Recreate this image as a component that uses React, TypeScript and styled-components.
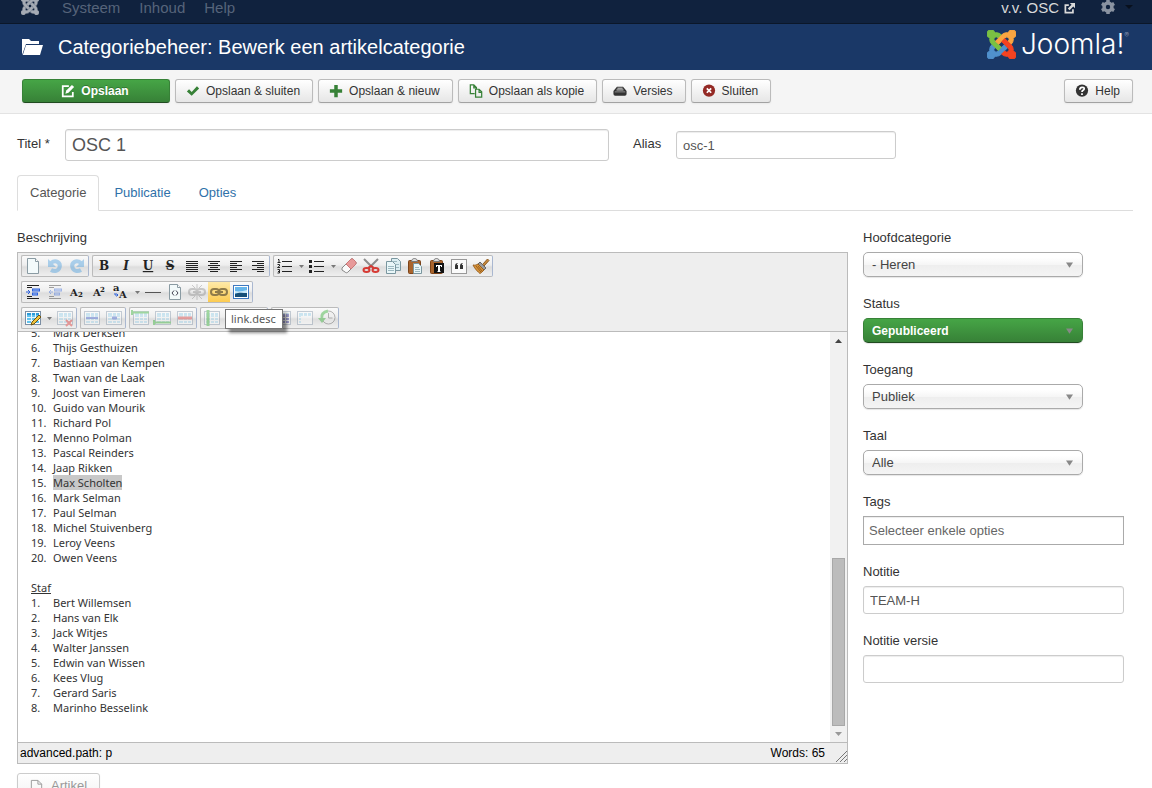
import React, { ReactNode } from "react";
import styled, { createGlobalStyle, css } from "styled-components";

const GlobalStyle = createGlobalStyle`
  *, *::before, *::after { box-sizing: border-box; }
  body {
    margin: 0;
    background: #fff;
    color: #333;
    font: 13px/18px "Liberation Sans", Arial, sans-serif;
  }
  button, input, select { font: inherit; color: inherit; margin: 0; }
  a { color: #3071a9; text-decoration: none; }
`;

const Page = styled.div`
  height: 100vh;
  overflow: hidden;
`;

/* ---------- top navigation ---------- */

const NavBar = styled.nav`
  display: flex;
  align-items: flex-start;
  padding: 0 19px 7px 21px;
  background: #10223e;
  border-bottom: 1px solid #0b1729;
  font-size: 15px;
  line-height: 16px;
`;

const NavMark = styled.a`
  display: flex;
  width: 41px;
  height: 15px;
  align-items: flex-end;
  overflow: hidden;
`;

const NavMenu = styled.div`
  display: flex;
  flex: 1;
  gap: 19px;
`;

const NavLink = styled.a`
  color: #56647a;
`;

const SiteLink = styled.a`
  display: flex;
  align-items: center;
  gap: 5px;
  margin-right: 26px;
  color: #d9d9d9;
`;

const GearButton = styled.button`
  display: flex;
  align-items: center;
  gap: 10px;
  height: 14px;
  padding: 0;
  border: 0;
  background: none;
  color: #8a93a1;
`;

/* ---------- title bar ---------- */

const Header = styled.header`
  display: flex;
  align-items: center;
  height: 46px;
  padding: 0 23px 0 22px;
  background: #1a3867;
  color: #fff;
`;

const PageTitle = styled.h1`
  flex: 1;
  margin: 0 0 0 15px;
  font-size: 20px;
  line-height: 24px;
  font-weight: 400;
`;

const Logo = styled.div`
  display: flex;
  align-items: center;
  gap: 5px;
  padding-bottom: 6px;
`;

const LogoWord = styled.span`
  display: flex;
  font: 300 28px/30px Inter, sans-serif;
`;

const Registered = styled.sup`
  color: #8c9bb3;
  font-size: 7px;
  line-height: 14px;
`;

/* ---------- action bar ---------- */

const ActionBar = styled.div`
  display: flex;
  gap: 5px;
  padding: 9px 19px 10px 22px;
  background: #f5f5f5;
  border-bottom: 1px solid #e3e3e3;
`;

const ActionButton = styled.button<{ $primary?: boolean; $end?: boolean }>`
  display: flex;
  align-items: center;
  justify-content: center;
  gap: 6px;
  height: 24px;
  padding: 0 12px 0 10px;
  border: 1px solid #b3b3b3;
  border-color: #bbb #bbb #a2a2a2;
  border-radius: 3px;
  background: linear-gradient(#fff, #e6e6e6);
  box-shadow: 0 1px 2px rgba(0, 0, 0, 0.05);
  font-size: 12px;
  white-space: nowrap;
  ${(p) => p.$end && css`margin-left: auto;`}
  ${(p) =>
    p.$primary &&
    css`
      width: 148px;
      border-color: #378137 #378137 #204b20;
      background: linear-gradient(#46a546, #378137);
      color: #fff;
      font-weight: 700;
      text-shadow: 0 -1px 0 rgba(0, 0, 0, 0.25);
    `}
`;

/* ---------- form ---------- */

const Main = styled.main`
  padding: 15px 19px 0 17px;
`;

const TitleRow = styled.div`
  display: flex;
  align-items: center;
  height: 32px;
`;

const RowLabel = styled.label<{ $width: number }>`
  width: ${(p) => p.$width}px;
  padding-bottom: 3px;
`;

const TextInput = styled.input<{ $large?: boolean; $square?: boolean }>`
  height: ${(p) => (p.$large ? 32 : 28)}px;
  padding: 0 6px;
  border: 1px solid #ccc;
  border-radius: 3px;
  background: #fff;
  box-shadow: inset 0 1px 1px rgba(0, 0, 0, 0.075);
  color: #555;
  ${(p) =>
    p.$large &&
    css`
      flex: 0 1 544px;
      font-size: 18px;
    `}
  ${(p) =>
    p.$square &&
    css`
      height: 29px;
      padding: 0 5px;
      border-color: #aaa;
      border-radius: 0;
    `}
  &::placeholder { color: #666; opacity: 1; }
`;

const AliasField = styled.div`
  display: flex;
  align-items: center;
  margin-left: 24px;
  ${TextInput} { width: 220px; }
`;

const Tabs = styled.div`
  display: flex;
  gap: 2px;
  margin-top: 14px;
  border-bottom: 1px solid #ddd;
`;

const Tab = styled.a<{ $active?: boolean }>`
  padding: 8px 12px;
  margin-bottom: -1px;
  border: 1px solid transparent;
  border-radius: 4px 4px 0 0;
  ${(p) =>
    p.$active &&
    css`
      border-color: #ddd #ddd #fff;
      background: #fff;
      color: #555;
    `}
`;

const Columns = styled.div`
  display: grid;
  grid-template-columns: minmax(0, 1fr) 261px;
  gap: 15px;
  padding: 18px 9px 0 0;
`;

const FieldLabel = styled.label`
  display: block;
  margin-bottom: 5px;
`;

const Side = styled.div`
  display: flex;
  flex-direction: column;
  gap: 18px;
  ${TextInput} { display: block; width: 100%; }
`;

const SelectBox = styled.div`
  display: grid;
  width: 220px;
  align-items: center;
`;

const SelectControl = styled.select<{ $green?: boolean }>`
  grid-area: 1 / 1;
  appearance: none;
  height: 25px;
  padding: 0 24px 0 8px;
  border: 1px solid #aaa;
  border-radius: 5px;
  background: linear-gradient(#fff 20%, #f6f6f6 50%, #eee 52%, #f4f4f4 100%);
  box-shadow: 0 1px 1px rgba(0, 0, 0, 0.1);
  color: #444;
  ${(p) =>
    p.$green &&
    css`
      border-color: #378137 #378137 #204b20;
      background: linear-gradient(#46a546, #378137);
      color: #fff;
      font-size: 12px;
      font-weight: 700;
    `}
`;

const SelectArrow = styled.svg`
  grid-area: 1 / 1;
  justify-self: end;
  margin-right: 10px;
  pointer-events: none;
`;

/* ---------- editor ---------- */

const Editor = styled.div`
  border: 1px solid #bbb;
  background: #eee;
`;

const Toolbars = styled.div`
  display: flex;
  flex-direction: column;
  gap: 4px;
  padding: 2px 3px;
  border-bottom: 1px solid #bbb;
`;

const ToolRow = styled.div`
  display: flex;
  gap: 3px;
`;

const ToolGroup = styled.div`
  display: flex;
  height: 22px;
  border: 1px solid #bbb;
  border-right-color: #a9b7d0;
  border-radius: 2px;
  background: linear-gradient(#fafafa, #eee 45%, #ddd 55%, #efefef);
`;

const ToolButton = styled.button<{ $faded?: boolean; $hot?: boolean }>`
  display: flex;
  align-items: center;
  justify-content: center;
  width: 22px;
  height: 20px;
  padding: 0;
  border: 0;
  background: ${(p) => (p.$hot ? "linear-gradient(#fee9a8, #fccb51)" : "none")};
  svg { opacity: ${(p) => (p.$faded ? 0.4 : 1)}; }
`;

const ToolArrow = styled(ToolButton)`
  width: 10px;
`;

const TooltipAnchor = styled.div`
  position: relative;
`;

const Tooltip = styled.div`
  position: absolute;
  top: 27px;
  left: 17px;
  z-index: 2;
  padding: 0 6px 0 5px;
  border: 1px solid #767676;
  background: #fff;
  box-shadow: 4px 4px 3px rgba(0, 0, 0, 0.45);
  color: #575757;
  font: 11px/18px "Noto Sans", sans-serif;
  white-space: nowrap;
`;

const EditArea = styled.div`
  display: flex;
  height: 410px;
  background: #fff;
`;

const Document = styled.div`
  display: flex;
  flex: 1;
  flex-direction: column;
  justify-content: flex-end;
  padding: 0 13px 27px;
  overflow: hidden;
  font: 11px/15px "Noto Sans", Tahoma, sans-serif;
`;

const Names = styled.ol`
  flex: none;
  margin: 0;
  padding: 0;
  list-style: none;
`;

const NameRow = styled.li`
  display: flex;
`;

const Num = styled.span`
  width: 22px;
`;

const Selected = styled.mark`
  background: #c8c8c8;
  color: inherit;
`;

const StafHeading = styled.p`
  margin: 15px 0 0;
  text-decoration: underline;
`;

const Scrollbar = styled.div`
  display: flex;
  flex-direction: column;
  align-items: center;
  width: 17px;
  padding: 7px 1px 6px;
  background: #f1f1f1;
`;

const Thumb = styled.div`
  width: 13px;
  height: 168px;
  margin: auto 0 6px;
  border: 1px solid #a8a8a8;
  background: #bcbcbc;
`;

const StatusBar = styled.div`
  display: flex;
  align-items: center;
  justify-content: space-between;
  height: 21px;
  padding-left: 2px;
  border-top: 1px solid #bbb;
  color: #000;
  font-size: 12px;
`;

const WordCount = styled.span`
  display: flex;
  align-items: flex-end;
  gap: 10px;
`;

const InsertButton = styled(ActionButton)`
  height: 26px;
  gap: 7px;
  margin-top: 9px;
  padding: 0 12px 0 11px;
  color: #999;
  font-size: 13px;
  background: linear-gradient(#fff, #f2f2f2);
  border-color: #ccc;
`;

/* ---------- icons ---------- */

const ARM =
  "M16.719 14.759L14.22 17.26l-2.37 2.37-.462.466c-1.368 1.365-3.297 1.83-5.047 1.397-.327 1.424-1.604 2.49-3.13 2.49C1.438 23.983 0 22.547 0 20.772c0-1.518 1.055-2.789 2.469-3.123-.446-1.76.016-3.705 1.396-5.08l.179-.18 2.37 2.37-.184.181c-.769.779-.769 2.024 0 2.789.771.78 2.022.78 2.787 0l.465-.465 2.367-2.371 2.502-2.506z";

const JoomlaMark = ({ size, colors }: { size: number; colors: string[] }) => (
  <svg width={size} height={size} viewBox="0 0 24 24" style={{ flex: "none" }} aria-hidden>
    {colors.map((c, i) => (
      <path key={i} d={ARM} fill={c} stroke={c} strokeWidth="0.9" transform={`rotate(${i * 90} 12 12)`} />
    ))}
  </svg>
);

const Triangle = ({ w = 5, h = 3, color = "#777", up = false }) => (
  <svg width={w} height={h} viewBox="0 0 10 10" preserveAspectRatio="none" aria-hidden>
    <path d={up ? "M0 10L5 0L10 10z" : "M0 0H10L5 10z"} fill={color} />
  </svg>
);

const Glyph = ({ children, w = 14 }: { children: ReactNode; w?: number }) => (
  <svg width={w} height={w} viewBox="0 0 16 16" fill="none" aria-hidden>
    {children}
  </svg>
);

const EditIcon = () => (
  <Glyph>
    <path d="M9 2.500H2v11.500h11.500V9" stroke="#fff" strokeWidth="2" />
    <path d="M5 11l1-3.500L12.500 1 15 3.500 8.500 10z" fill="#fff" />
  </Glyph>
);
const CheckIcon = () => (
  <Glyph>
    <path d="M1 8.500L3.500 6l3 3L12.500 2.500 15 5l-8.500 8.500z" fill="#378137" />
  </Glyph>
);
const PlusIcon = () => (
  <Glyph>
    <path d="M6 1h4v5h5v4h-5v5H6v-5H1V6h5z" fill="#378137" />
  </Glyph>
);
const CopyIcon = () => (
  <Glyph>
    <path d="M6.500 11H1.500V1h4L8.500 4v2M5.500 1v3.500h3" stroke="#378137" strokeWidth="1.400" />
    <path d="M7.500 6h4l3 3v6h-7zM11.500 6v3.500h3" stroke="#378137" strokeWidth="1.400" />
  </Glyph>
);
const DriveIcon = () => (
  <Glyph>
    <path d="M4.500 3h7l4 5v3.500a2 2 0 0 1-2 2h-11a2 2 0 0 1-2-2V8z" fill="#333" />
    <path d="M5 4.800h6M4 6.800h8" stroke="#eee" />
    <path d="M2 9h12" stroke="#999" />
  </Glyph>
);
const CancelIcon = () => (
  <Glyph>
    <circle cx="8" cy="7.500" r="7" fill="#942a25" />
    <path d="M5.500 5l5 5M10.500 5l-5 5" stroke="#fff" strokeWidth="2" />
  </Glyph>
);
const HelpIcon = () => (
  <Glyph>
    <circle cx="8" cy="7.500" r="7" fill="#333" />
    <path d="M5.500 6.500C5.500 3 10.500 3 10.500 5.500 10.500 7.500 8 7 8 9" stroke="#fff" strokeWidth="2" />
    <path d="M7 10.500h2v2H7z" fill="#fff" />
  </Glyph>
);
const FileIcon = () => (
  <Glyph w={15}>
    <path d="M2.500 1.500h7l4 4v9h-11zM9.500 1.500v4h4" stroke="#999" />
  </Glyph>
);
const ExternalIcon = () => (
  <Glyph w={11}>
    <path d="M7 3H2v11h11V9" stroke="currentColor" strokeWidth="2.500" />
    <path d="M8.500 0H16v7.500L13.500 5l-5.500 5.500L5.500 8l5.500-5.500z" fill="currentColor" />
  </Glyph>
);
const GearIcon = () => (
  <Glyph w={14}>
    <circle cx="8" cy="8" r="4.500" stroke="currentColor" strokeWidth="4" />
    <path d="M8 0v3M8 13v3M1 4l2.600 1.500M12.400 10.500L15 12M1 12l2.600-1.500M12.400 5.500L15 4" stroke="currentColor" strokeWidth="4" />
  </Glyph>
);
const FolderIcon = () => (
  <svg width="21" height="17" viewBox="0 0 21 17" aria-hidden>
    <path d="M0 16V0h7l2 2h8v3H4z" fill="#fff" />
    <path d="M4 6h17l-3 10H.8z" fill="#fff" />
  </svg>
);

const Svg = ({ children }: { children: ReactNode }) => (
  <svg width="20" height="20" viewBox="0 0 20 20" fill="none" aria-hidden>
    {children}
  </svg>
);

const serif = "'DejaVu Serif', serif";
const Letter = ({ t, italic, line }: { t: string; italic?: boolean; line?: string }) => (
  <Svg>
    <text x="10" y="14" textAnchor="middle" fill="#222" fontFamily={serif} fontSize="12" fontWeight="700" fontStyle={italic ? "italic" : "normal"} textDecoration={line}>
      {t}
    </text>
  </Svg>
);
const Bars = ({ rows }: { rows: number[][] }) => (
  <Svg>
    {rows.map(([x, w], i) => (
      <rect key={i} x={x} y={5 + i * 2} width={w} height="1" fill="#222" />
    ))}
  </Svg>
);
const paper = <path d="M4.500 2.500h8l3 3v12h-11z" fill="#f3fafb" stroke="#8a9ba3" />;
const paperFold = <path d="M12.500 2.500v3h3" stroke="#8a9ba3" fill="#fff" />;

const Sheet = ({ children, head = "#8fd0ee" }: { children?: ReactNode; head?: string }) => (
  <Svg>
    <rect x="2.500" y="3.500" width="15" height="13" fill="#fff" stroke="#7b8ea3" />
    <path d="M4 5h12v10H4z" fill="#9fd8f2" />
    <path d="M4 5h12v2H4z" fill={head} />
    <path d="M4 9.500h12M4 12.500h12M8.500 5v10M12.500 5v10" stroke="#fff" />
    {children}
  </Svg>
);

const dent = (flip: boolean) => (
  <Svg>
    <path d="M4 3.500h12M4 16.500h12M4 5.500h5M4 14.500h5" stroke="#222" />
    <path d="M9 8h8M9 12h6" stroke="#2b5fd9" strokeWidth="3" />
    <path d="M10 8h6M10 12h4" stroke="#9dbcf5" />
    <path d={flip ? "M8 10H4M6 8l-2 2 2 2" : "M3 10h4M5 8l2 2-2 2"} stroke="#2b5fd9" />
  </Svg>
);

const clipboard = (
  <>
    <rect x="3.500" y="4.500" width="12" height="13" rx="1" fill="#a9642c" stroke="#7c4319" />
    <path d="M6.500 5.500c0-4 6-4 6 0z" fill="#ddd" stroke="#777" />
  </>
);

const undoArrow = (
  <>
    <path d="M6 7c5-4 10 0 8.500 4.500C13.500 15 9.500 16 6 14" stroke="#3f9ae0" strokeWidth="4" />
    <path d="M3 3v8h8z" fill="#3f9ae0" />
  </>
);

const chain = (c: string) => (
  <g stroke={c} strokeWidth="2">
    <rect x="2" y="7" width="8" height="6" rx="3" />
    <rect x="10" y="7" width="8" height="6" rx="3" />
    <path d="M6 10h8" />
  </g>
);

const icons: Record<string, ReactNode> = {
  new: <Svg>{paper}{paperFold}</Svg>,
  undo: <Svg>{undoArrow}</Svg>,
  redo: <Svg><g transform="translate(20 0) scale(-1 1)">{undoArrow}</g></Svg>,
  bold: <Letter t="B" />,
  italic: <Letter t="I" italic />,
  underline: <Letter t="U" line="underline" />,
  strike: <Letter t="S" line="line-through" />,
  full: <Bars rows={[[4, 12], [4, 12], [4, 12], [4, 12], [4, 12], [4, 12]]} />,
  center: <Bars rows={[[4, 12], [6, 8], [4, 12], [6, 8], [4, 12], [6, 8]]} />,
  left: <Bars rows={[[4, 12], [4, 7], [4, 12], [4, 7], [4, 12], [4, 7]]} />,
  right: <Bars rows={[[4, 12], [9, 7], [4, 12], [9, 7], [4, 12], [9, 7]]} />,
  ol: (
    <Svg>
      <path d="M7 5.500h10M7 10.500h10M7 15.500h10" stroke="#222" />
      <path d="M3 3.500h1v3M2.500 6.500h3M2.500 8.500h2v1.500l-2 1.500h2.500M2.500 13.500h2v3.500h-2M3 15.500h1.500" stroke="#222" />
    </Svg>
  ),
  ul: (
    <Svg>
      <path d="M7 5.500h10M7 10.500h10M7 15.500h10" stroke="#222" />
      <path d="M2 4h3v3H2zM2 9h3v3H2zM2 14h3v3H2z" fill="#222" />
    </Svg>
  ),
  eraser: (
    <Svg>
      <path d="M3 12l8.500-8.500c1-1 2-1 3 0l2 2c.8.800.8 2 0 3L9 16c-1 1-2 1-3 0l-3-2z" fill="#fafafa" stroke="#888" />
      <path d="M7 8l4.500-4.500c1-1 2-1 3 0l2 2c.8.800.8 2 0 3L12 13z" fill="#e79a9a" stroke="#c77" />
    </Svg>
  ),
  cut: (
    <Svg>
      <path d="M3 3l10 10M17 3L7 13" stroke="#8d8d8d" strokeWidth="2" />
      <ellipse cx="5.500" cy="14" rx="3" ry="2" stroke="#d63a34" strokeWidth="2" />
      <ellipse cx="14.500" cy="14" rx="3" ry="2" stroke="#d63a34" strokeWidth="2" />
      <path d="M7 12l3-2 3 2" stroke="#d63a34" strokeWidth="2" />
    </Svg>
  ),
  copy: (
    <Svg>
      <path d="M8.500 2.500h6l3 3v9h-9z" fill="#dceef2" stroke="#7a969f" />
      <path d="M3.500 5.500h6l3 3v9h-9z" fill="#e9f6f8" stroke="#7a969f" />
      <path d="M5 10.500h6M5 12.500h6M5 14.500h6M10 5.500h4M13 8.500h3M13 11.500h3" stroke="#9db9c1" />
    </Svg>
  ),
  paste: (
    <Svg>
      {clipboard}
      <path d="M8.500 7.500h5l3 3v7h-8z" fill="#e9f6f8" stroke="#7a969f" />
      <path d="M10 11.500h4M10 13.500h5M10 15.500h5" stroke="#9db9c1" />
    </Svg>
  ),
  pastetext: (
    <Svg>
      {clipboard}
      <rect x="7" y="7" width="10" height="10" fill="#111" />
      <path d="M9 9.500h6M9.500 9v2M14.500 9v2M10.500 15.500h3" stroke="#fff" />
      <path d="M12 9v7" stroke="#fff" strokeWidth="2" />
    </Svg>
  ),
  quote: (
    <Svg>
      <rect x="2.500" y="3.500" width="15" height="14" fill="#fafafa" stroke="#999" />
      <path d="M6 10c0-2 1-3 3-3-1 1-1 1.500-1 2h1v4H6zM11 10c0-2 1-3 3-3-1 1-1 1.500-1 2h1v4h-3z" fill="#333" />
    </Svg>
  ),
  broom: (
    <Svg>
      <path d="M11.500 8.500l5-5.500 1.500 1.500-5 5.500z" fill="#c98a3c" stroke="#8a5a22" />
      <path d="M9 6l6 6-2 2-6-6z" fill="#9a9a9a" stroke="#666" />
      <path d="M7 8l6 6c-1 1.500-3 2.500-4 3.500C7 16 4 13 2 9c2 .5 3.500 0 5-1z" fill="#d8943a" stroke="#99601f" />
      <path d="M5 10l5 6M7 10l4 5" stroke="#99601f" />
    </Svg>
  ),
  indent: dent(false),
  outdent: dent(true),
  sub: (
    <Svg>
      <text x="3" y="14" fill="#222" fontFamily={serif} fontSize="10" fontWeight="700">A</text>
      <text x="11" y="15" fill="#222" fontFamily={serif} fontSize="7" fontWeight="700">2</text>
    </Svg>
  ),
  sup: (
    <Svg>
      <text x="4" y="14" fill="#222" fontFamily={serif} fontSize="10" fontWeight="700">A</text>
      <text x="11" y="10" fill="#222" fontFamily={serif} fontSize="7" fontWeight="700">2</text>
    </Svg>
  ),
  style: (
    <Svg>
      <text x="2" y="9" fill="#222" fontFamily={serif} fontSize="10" fontWeight="700">a</text>
      <text x="8" y="16" fill="#222" fontFamily={serif} fontSize="10" fontWeight="700">A</text>
      <path d="M4 11v2h3M5.500 11.500L7 13l-1.500 1.500" stroke="#2b5fd9" />
    </Svg>
  ),
  hr: <Svg><path d="M2 10.500h16" stroke="#555" /></Svg>,
  code: <Svg>{paper}{paperFold}<path d="M9 8.500L7 11l2 2.500M11 8.500l2 2.500-2 2.500" stroke="#445" /></Svg>,
  unlink: <Svg>{chain("#888")}<path d="M10 2v16M5 3l3 3M15 3l-3 3M5 17l3-3M15 17l-3-3" stroke="#888" /></Svg>,
  link: <Svg>{chain("#8f7b4a")}</Svg>,
  image: (
    <Svg>
      <rect x="2.500" y="3.500" width="15" height="13" fill="#fff" stroke="#3e78c0" />
      <path d="M4 5h12v10H4z" fill="#66b5ea" />
      <path d="M4 9c4 1 8 0 12-1v3H4z" fill="#c9e8f8" />
      <path d="M4 12c4-2 8-1 12-1v4H4z" fill="#174f78" />
    </Svg>
  ),
  table: (
    <Sheet head="#2d9bd8">
      <path d="M4 7h12v8H4z" fill="#63c3ee" />
      <path d="M4 9.500h12M4 12.500h12M8.500 5v10M12.500 5v10" stroke="#e7f6fc" />
      <path d="M8 17l1-3 7-7 2 2-7 7z" fill="#f0c43c" stroke="#6a5316" />
    </Sheet>
  ),
  delTable: <Sheet><path d="M11 12l6 6M17 12l-6 6" stroke="#d22" strokeWidth="2" /></Sheet>,
  rowProps: <Sheet><path d="M4 10h12" stroke="#35c" strokeWidth="2" /></Sheet>,
  cellProps: <Sheet><path d="M8 8.500h5v3H8z" fill="#35c" /></Sheet>,
  rowBefore: <Sheet><path d="M1 4.500h17M1 2v5" stroke="#2a2" strokeWidth="2" /></Sheet>,
  rowAfter: <Sheet><path d="M1 14.500h17M1 12v5" stroke="#2a2" strokeWidth="2" /></Sheet>,
  delRow: <Sheet><path d="M3 10h14" stroke="#d33" strokeWidth="3" /></Sheet>,
  colBefore: <Sheet><path d="M6 2v16" stroke="#2a2" strokeWidth="3" /></Sheet>,
  colAfter: <Sheet><path d="M14 2v16" stroke="#2a2" strokeWidth="3" /></Sheet>,
  delCol: <Sheet><path d="M10 2v16" stroke="#d33" strokeWidth="3" /></Sheet>,
  split: <Sheet><path d="M9 6h7v9H9z" fill="#33a" /><path d="M9 9.500h7M9 12.500h7M12.500 6v9" stroke="#fff" /></Sheet>,
  merge: <Sheet><path d="M6 8h10v7H6z" fill="#fff" /></Sheet>,
  restore: (
    <Svg>
      <circle cx="11.500" cy="9.500" r="6.500" fill="#eee" stroke="#555" />
      <path d="M11.500 5v5h4" stroke="#555" />
      <path d="M11 3C6 4 4 7 5 10" stroke="#2a2" strokeWidth="3" />
      <path d="M1 10h8l-4 5z" fill="#2a2" />
    </Svg>
  ),
};

/* ---------- editor toolbar data ---------- */

type Tool = { id: string; label: string; faded?: boolean; hot?: boolean; arrow?: boolean; tip?: string };

const toolRows: Tool[][][] = [
  [
    [
      { id: "new", label: "Nieuw document" },
      { id: "undo", label: "Ongedaan maken", faded: true },
      { id: "redo", label: "Opnieuw", faded: true },
    ],
    [
      { id: "bold", label: "Vet" },
      { id: "italic", label: "Cursief" },
      { id: "underline", label: "Onderstrepen" },
      { id: "strike", label: "Doorhalen" },
      { id: "full", label: "Uitvullen" },
      { id: "center", label: "Centreren" },
      { id: "left", label: "Links uitlijnen" },
      { id: "right", label: "Rechts uitlijnen" },
    ],
    [
      { id: "ol", label: "Genummerde lijst", arrow: true },
      { id: "ul", label: "Opsomming", arrow: true },
      { id: "eraser", label: "Opmaak wissen" },
      { id: "cut", label: "Knippen" },
      { id: "copy", label: "Kopiëren" },
      { id: "paste", label: "Plakken" },
      { id: "pastetext", label: "Plakken als tekst" },
      { id: "quote", label: "Citaat" },
      { id: "broom", label: "Code opruimen" },
    ],
  ],
  [
    [
      { id: "indent", label: "Inspringen" },
      { id: "outdent", label: "Uitspringen", faded: true },
      { id: "sub", label: "Subscript" },
      { id: "sup", label: "Superscript" },
      { id: "style", label: "Hoofdletters", arrow: true },
      { id: "hr", label: "Lijn" },
      { id: "code", label: "Broncode" },
      { id: "unlink", label: "Link verwijderen", faded: true },
      { id: "link", label: "Link", hot: true, tip: "link.desc" },
      { id: "image", label: "Afbeelding" },
    ],
  ],
  [
    [
      { id: "table", label: "Tabel", arrow: true },
      { id: "delTable", label: "Tabel verwijderen", faded: true },
    ],
    [
      { id: "rowProps", label: "Rij-eigenschappen", faded: true },
      { id: "cellProps", label: "Cel-eigenschappen", faded: true },
    ],
    [
      { id: "rowBefore", label: "Rij boven", faded: true },
      { id: "rowAfter", label: "Rij onder", faded: true },
      { id: "delRow", label: "Rij verwijderen", faded: true },
    ],
    [
      { id: "colBefore", label: "Kolom links", faded: true },
      { id: "colAfter", label: "Kolom rechts", faded: true },
      { id: "delCol", label: "Kolom verwijderen", faded: true },
    ],
    [
      { id: "split", label: "Cellen splitsen", faded: true },
      { id: "merge", label: "Cellen samenvoegen", faded: true },
      { id: "restore", label: "Concept herstellen", faded: true },
    ],
  ],
];

const ToolItem = ({ tool }: { tool: Tool }) => {
  const button = (
    <ToolButton type="button" aria-label={tool.label} $faded={tool.faded} $hot={tool.hot}>
      {icons[tool.id]}
    </ToolButton>
  );
  return (
    <>
      {tool.tip ? (
        <TooltipAnchor>
          {button}
          <Tooltip role="tooltip">{tool.tip}</Tooltip>
        </TooltipAnchor>
      ) : (
        button
      )}
      {tool.arrow && (
        <ToolArrow type="button" aria-label={`${tool.label} opties`}>
          <Triangle />
        </ToolArrow>
      )}
    </>
  );
};

const players = [
  "Mark Derksen", "Thijs Gesthuizen", "Bastiaan van Kempen", "Twan van de Laak",
  "Joost van Eimeren", "Guido van Mourik", "Richard Pol", "Menno Polman",
  "Pascal Reinders", "Jaap Rikken", "Max Scholten", "Mark Selman", "Paul Selman",
  "Michel Stuivenberg", "Leroy Veens", "Owen Veens",
];

const staff = [
  "Bert Willemsen", "Hans van Elk", "Jack Witjes", "Walter Janssen",
  "Edwin van Wissen", "Kees Vlug", "Gerard Saris", "Marinho Besselink",
];

const NameList = ({ names, start, selected }: { names: string[]; start: number; selected?: string }) => (
  <Names>
    {names.map((name, i) => (
      <NameRow key={name}>
        <Num>{start + i}.</Num>
        {name === selected ? <Selected>{name}</Selected> : <span>{name}</span>}
      </NameRow>
    ))}
  </Names>
);

const SelectField = ({ id, label, value, green }: { id: string; label: string; value: string; green?: boolean }) => (
  <div>
    <FieldLabel htmlFor={id}>{label}</FieldLabel>
    <SelectBox>
      <SelectControl id={id} $green={green}>
        <option>{value}</option>
      </SelectControl>
      <SelectArrow width="7" height="6" viewBox="0 0 8 6" aria-hidden>
        <path d="M0 0h8L4 6z" fill="#888" />
      </SelectArrow>
    </SelectBox>
  </div>
);

export default function App() {
  return (
    <Page>
      <GlobalStyle />
      <NavBar>
        <NavMark href="#" aria-label="Joomla">
          <JoomlaMark size={18} colors={["#a5abb4", "#a5abb4", "#a5abb4", "#a5abb4"]} />
        </NavMark>
        <NavMenu>
          <NavLink href="#">Systeem</NavLink>
          <NavLink href="#">Inhoud</NavLink>
          <NavLink href="#">Help</NavLink>
        </NavMenu>
        <SiteLink href="#">
          v.v. OSC <ExternalIcon />
        </SiteLink>
        <GearButton type="button" aria-label="Instellingen">
          <GearIcon />
          <Triangle w={8} h={4} color="#08101d" />
        </GearButton>
      </NavBar>

      <Header>
        <FolderIcon />
        <PageTitle>Categoriebeheer: Bewerk een artikelcategorie</PageTitle>
        <Logo>
          <JoomlaMark size={29} colors={["#5091cd", "#7ac143", "#f9a541", "#f44321"]} />
          <LogoWord>
            Joomla!<Registered>®</Registered>
          </LogoWord>
        </Logo>
      </Header>

      <ActionBar>
        <ActionButton type="button" $primary><EditIcon />Opslaan</ActionButton>
        <ActionButton type="button"><CheckIcon />Opslaan &amp; sluiten</ActionButton>
        <ActionButton type="button"><PlusIcon />Opslaan &amp; nieuw</ActionButton>
        <ActionButton type="button"><CopyIcon />Opslaan als kopie</ActionButton>
        <ActionButton type="button"><DriveIcon />Versies</ActionButton>
        <ActionButton type="button"><CancelIcon />Sluiten</ActionButton>
        <ActionButton type="button" $end><HelpIcon />Help</ActionButton>
      </ActionBar>

      <Main>
        <TitleRow>
          <RowLabel htmlFor="title" $width={48}>Titel *</RowLabel>
          <TextInput id="title" $large defaultValue="OSC 1" />
          <AliasField>
            <RowLabel htmlFor="alias" $width={43}>Alias</RowLabel>
            <TextInput id="alias" defaultValue="osc-1" />
          </AliasField>
        </TitleRow>

        <Tabs>
          <Tab href="#" $active>Categorie</Tab>
          <Tab href="#">Publicatie</Tab>
          <Tab href="#">Opties</Tab>
        </Tabs>

        <Columns>
          <div>
            <FieldLabel as="div">Beschrijving</FieldLabel>
            <Editor>
              <Toolbars>
                {toolRows.map((row, r) => (
                  <ToolRow key={r}>
                    {row.map((group, g) => (
                      <ToolGroup key={g}>
                        {group.map((tool) => (
                          <ToolItem key={tool.id} tool={tool} />
                        ))}
                      </ToolGroup>
                    ))}
                  </ToolRow>
                ))}
              </Toolbars>
              <EditArea>
                <Document>
                  <NameList names={players} start={5} selected="Max Scholten" />
                  <StafHeading>Staf</StafHeading>
                  <NameList names={staff} start={1} />
                </Document>
                <Scrollbar>
                  <Triangle w={7} h={4} color="#444" up />
                  <Thumb />
                  <Triangle w={7} h={4} color="#999" />
                </Scrollbar>
              </EditArea>
              <StatusBar>
                <span>advanced.path: p</span>
                <WordCount>
                  Words: 65
                  <svg width="12" height="12" viewBox="0 0 12 12" aria-hidden>
                    <path d="M1 12L12 1M5 12l7-7M9 12l3-3" stroke="#777" />
                  </svg>
                </WordCount>
              </StatusBar>
            </Editor>
            <InsertButton type="button"><FileIcon />Artikel</InsertButton>
          </div>

          <Side>
            <SelectField id="parent" label="Hoofdcategorie" value="- Heren" />
            <SelectField id="status" label="Status" value="Gepubliceerd" green />
            <SelectField id="access" label="Toegang" value="Publiek" />
            <SelectField id="language" label="Taal" value="Alle" />
            <div>
              <FieldLabel htmlFor="tags">Tags</FieldLabel>
              <TextInput id="tags" $square placeholder="Selecteer enkele opties" />
            </div>
            <div>
              <FieldLabel htmlFor="note">Notitie</FieldLabel>
              <TextInput id="note" defaultValue="TEAM-H" />
            </div>
            <div>
              <FieldLabel htmlFor="version-note">Notitie versie</FieldLabel>
              <TextInput id="version-note" />
            </div>
          </Side>
        </Columns>
      </Main>
    </Page>
  );
}
